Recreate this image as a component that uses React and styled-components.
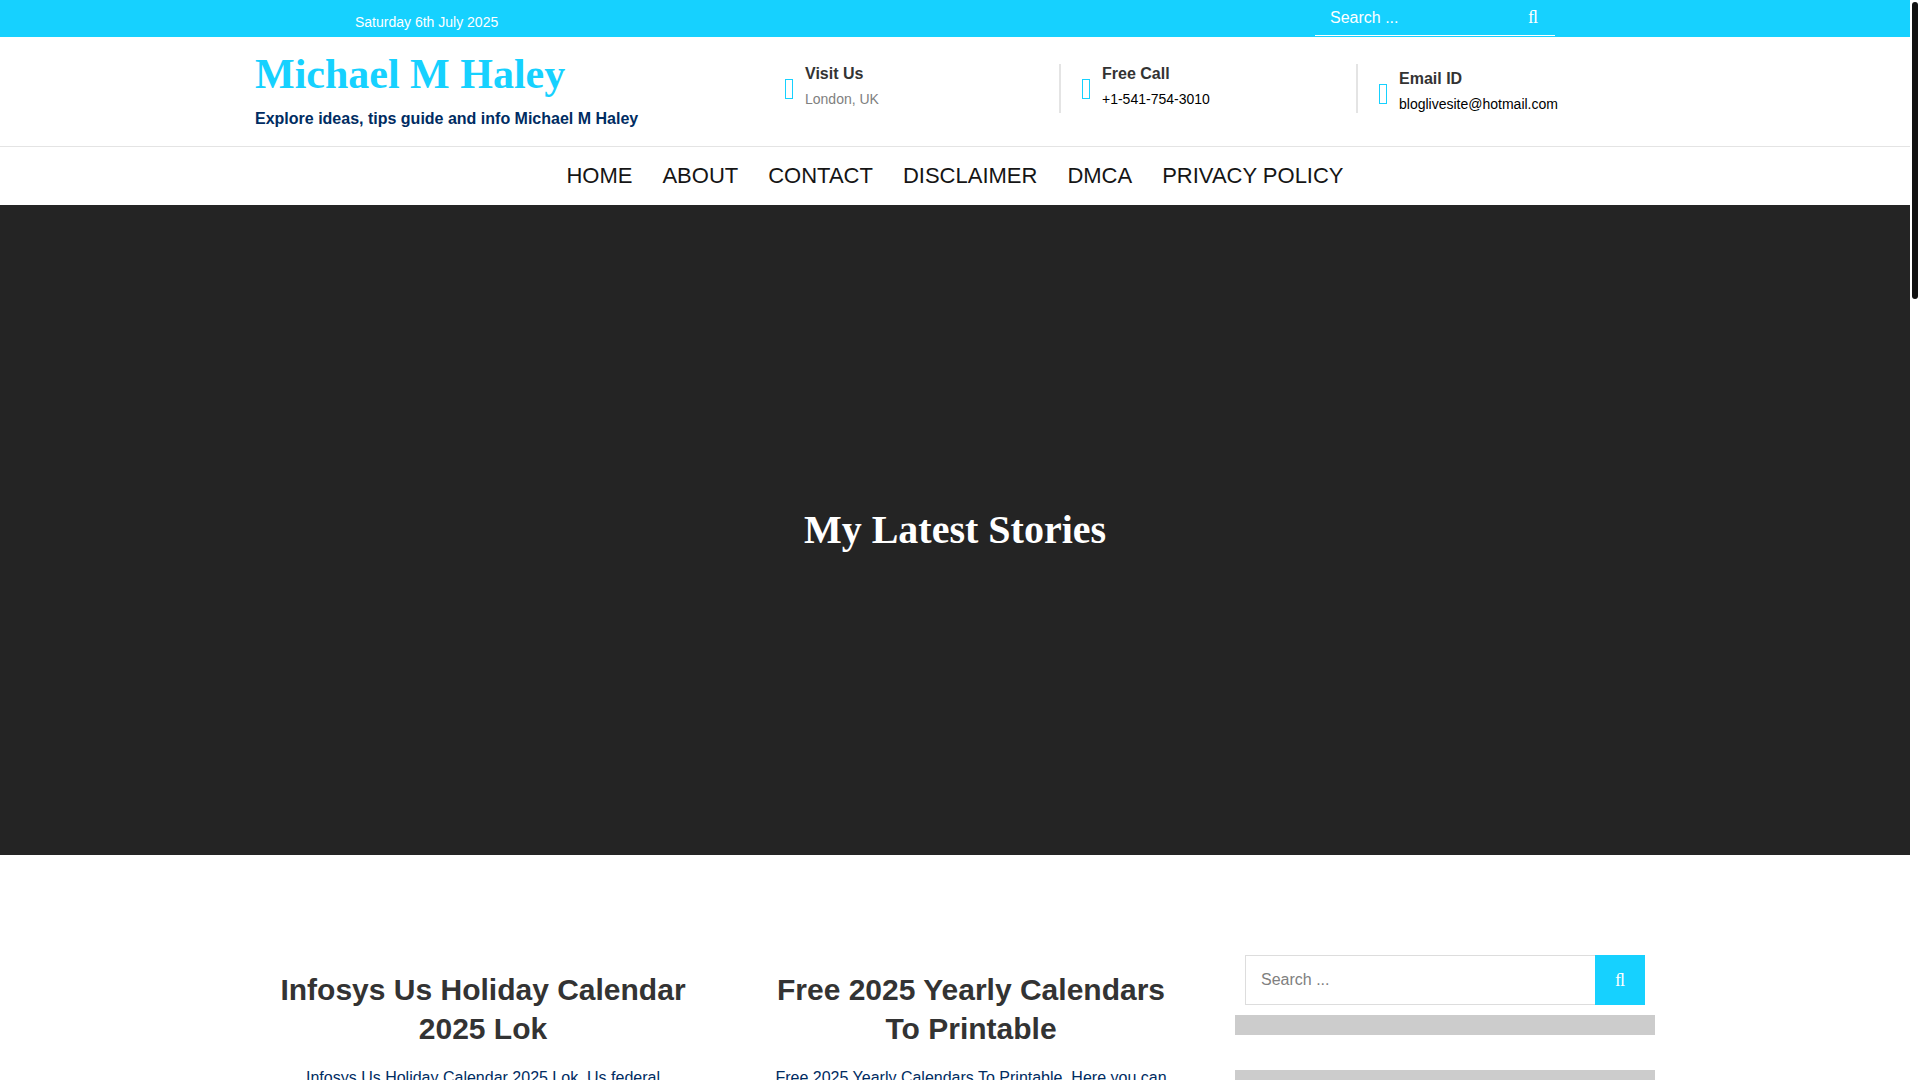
import React, { useState } from "react";
import styled, { createGlobalStyle } from "styled-components";

const cyan = "#16d1ff";
const navy = "#002c62";
const serif = `"Liberation Serif", serif`;
const searchGlyph = "\uFB02";

const contacts = [
  { title: "Visit Us", text: "London, UK" },
  { title: "Free Call", text: "+1-541-754-3010", href: "tel:+15417543010" },
  {
    title: "Email ID",
    text: "bloglivesite@hotmail.com",
    href: "mailto:bloglivesite@hotmail.com",
    low: true,
  },
];

const menu = ["Home", "About", "Contact", "Disclaimer", "DMCA", "Privacy Policy"];

const posts = [
  {
    title: "Infosys Us Holiday Calendar 2025 Lok",
    excerpt: "Infosys Us Holiday Calendar 2025 Lok. Us federal",
  },
  {
    title: "Free 2025 Yearly Calendars To Printable",
    excerpt: "Free 2025 Yearly Calendars To Printable. Here you can",
  },
];

function Search({ boxed }) {
  const [query, setQuery] = useState("");

  return (
    <SearchForm $boxed={boxed} role="search" onSubmit={(e) => e.preventDefault()}>
      <input
        type="search"
        aria-label="Search for"
        placeholder="Search ..."
        value={query}
        onChange={(e) => setQuery(e.target.value)}
      />
      <button type="submit" aria-label="Search">
        {searchGlyph}
      </button>
    </SearchForm>
  );
}

function App() {
  return (
    <Window>
      <GlobalStyle />
      <Page>
        <TopBar>
          <TopInner>
            <time dateTime="2025-07-06">Saturday 6th July 2025</time>
            <Search />
          </TopInner>
        </TopBar>

        <Header>
          <HeaderInner>
            <Brand>
              <SiteTitle>
                <a href="#home">Michael M Haley</a>
              </SiteTitle>
              <Tagline>Explore ideas, tips guide and info Michael M Haley</Tagline>
            </Brand>
            <Contacts>
              {contacts.map((item) => (
                <Contact key={item.title} $low={item.low}>
                  <MissingIcon />
                  <div>
                    <h2>{item.title}</h2>
                    <p>{item.href ? <a href={item.href}>{item.text}</a> : item.text}</p>
                  </div>
                </Contact>
              ))}
            </Contacts>
          </HeaderInner>
        </Header>

        <Nav>
          {menu.map((label) => (
            <a key={label} href="#menu">
              {label}
            </a>
          ))}
        </Nav>

        <Hero>
          <h2>My Latest Stories</h2>
        </Hero>

        <Main>
          <Posts>
            {posts.map((post) => (
              <Post key={post.title}>
                <h2>
                  <a href="#post">{post.title}</a>
                </h2>
                <p>{post.excerpt}</p>
              </Post>
            ))}
          </Posts>
          <Sidebar>
            <SearchWidget>
              <Search boxed />
            </SearchWidget>
            <Strip />
            <Strip />
          </Sidebar>
        </Main>
      </Page>
      <Rail>
        <Thumb />
      </Rail>
    </Window>
  );
}

const GlobalStyle = createGlobalStyle`
  *, *::before, *::after {
    box-sizing: border-box;
  }
  body {
    margin: 0;
    background: #fff;
    color: ${navy};
    font-family: "Liberation Sans", Arial, sans-serif;
    font-size: 16px;
    line-height: 28px;
  }
  h1, h2, p {
    margin: 0;
  }
  a {
    color: inherit;
    text-decoration: none;
  }
`;

const Window = styled.div`
  display: grid;
  grid-template-columns: minmax(0, 1fr) 10px;
  height: 100vh;
`;

const Page = styled.div`
  overflow-y: auto;
  scrollbar-width: none;
`;

const Rail = styled.div`
  padding: 2px;
`;

const Thumb = styled.div`
  height: 27.6%;
  border-radius: 3px;
  background: #111;
`;

const TopBar = styled.div`
  background: ${cyan};
  padding-bottom: 1px;
`;

const TopInner = styled.div`
  max-width: 1200px;
  margin: 0 auto;
  display: flex;
  justify-content: space-between;
  color: #fff;
  time {
    padding-top: 8px;
    font-size: 14px;
  }
`;

const SearchForm = styled.form`
  display: flex;
  width: ${(p) => (p.$boxed ? "100%" : "240px")};
  height: ${(p) => (p.$boxed ? "50px" : "36px")};
  border-bottom: ${(p) => (p.$boxed ? "none" : "1px solid #fff")};
  input {
    flex: 1;
    min-width: 0;
    padding: 0 15px;
    border: ${(p) => (p.$boxed ? "1px solid #ddd" : "none")};
    border-right: none;
    border-radius: 0;
    outline: none;
    appearance: none;
    background: transparent;
    color: inherit;
    font-family: inherit;
    font-size: 16px;
    &::placeholder {
      color: ${(p) => (p.$boxed ? "#808080" : "#fff")};
    }
  }
  button {
    width: ${(p) => (p.$boxed ? "50px" : "44px")};
    padding: 0;
    border: none;
    background: ${cyan};
    color: #fff;
    font-family: ${serif};
    font-size: 18px;
    cursor: pointer;
  }
`;

const Header = styled.header`
  border-bottom: 1px solid #e4e4e4;
`;

const HeaderInner = styled.div`
  max-width: 1400px;
  margin: 0 auto;
  display: flex;
  justify-content: space-between;
`;

const Brand = styled.div`
  padding: 12px 0 13px;
`;

const SiteTitle = styled.h1`
  color: ${cyan};
  font-family: ${serif};
  font-size: 42px;
  line-height: 50px;
`;

const Tagline = styled.p`
  padding-top: 6px;
  font-weight: bold;
`;

const Contacts = styled.div`
  display: grid;
  grid-template-columns: repeat(3, 297px);
  padding: 27px 2px 0 0;
`;

const Contact = styled.div`
  display: flex;
  gap: 12px;
  height: 49px;
  padding: ${(p) => (p.$low ? "5px" : 0)} 0 0 21px;
  border-left: 2px solid #e4e4e4;
  &:first-child {
    border-color: transparent;
  }
  h2 {
    color: #333;
    font-size: 16px;
    line-height: 20px;
  }
  p {
    padding-top: 5px;
    color: #808080;
    font-size: 14px;
    line-height: 20px;
  }
  a {
    color: #000;
  }
`;

const MissingIcon = styled.span`
  width: 8px;
  height: 20px;
  margin-top: 15px;
  border: 1px solid ${cyan};
`;

const Nav = styled.nav`
  display: flex;
  justify-content: center;
  gap: 30px;
  padding: 15px 0;
  color: #151515;
  font-size: 22px;
  text-transform: uppercase;
`;

const Hero = styled.section`
  display: flex;
  align-items: center;
  justify-content: center;
  min-height: 650px;
  background: #242424;
  color: #fff;
  h2 {
    font-family: ${serif};
    font-size: 40px;
    line-height: 50px;
  }
`;

const Main = styled.main`
  display: grid;
  grid-template-columns: minmax(0, 1fr) 420px;
  gap: 36px;
  max-width: 1400px;
  margin: 0 auto;
  padding-top: 90px;
`;

const Posts = styled.div`
  display: grid;
  grid-template-columns: 1fr 1fr;
  gap: 32px;
`;

const Post = styled.article`
  padding: 25px 24px;
  text-align: center;
  h2 {
    color: #333;
    font-size: 30px;
    line-height: 39px;
  }
  p {
    padding-top: 16px;
  }
`;

const Sidebar = styled.aside`
  display: flex;
  flex-direction: column;
  gap: 35px;
`;

const SearchWidget = styled.div`
  padding: 10px;
  margin-bottom: -35px;
`;

const Strip = styled.div`
  height: 20px;
  background: #ccc;
`;

export default App;
